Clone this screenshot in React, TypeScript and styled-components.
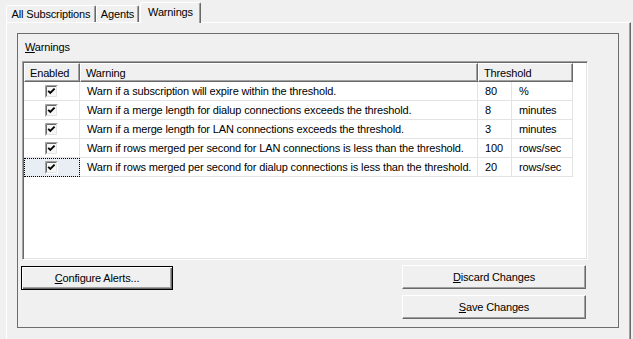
import styled, { createGlobalStyle } from "styled-components";

interface IWarning {
  text: string;
  value: string;
  unit: string;
}

const warnings: IWarning[] = [
  { text: "Warn if a subscription will expire within the threshold.", value: "80", unit: "%" },
  { text: "Warn if a merge length for dialup connections exceeds the threshold.", value: "8", unit: "minutes" },
  { text: "Warn if a merge length for LAN connections exceeds the threshold.", value: "3", unit: "minutes" },
  { text: "Warn if rows merged per second for LAN connections is less than the threshold.", value: "100", unit: "rows/sec" },
  { text: "Warn if rows merged per second for dialup connections is less than the threshold.", value: "20", unit: "rows/sec" },
];

function CheckBox() {
  return (
    <svg width="13" height="13" viewBox="0 0 13 13">
      <rect x="0" y="0" width="13" height="13" fill="#ffffff" />
      <path d="M0.5 12.5 V0.5 H12.5" stroke="#a0a0a0" fill="none" />
      <path d="M1.5 11.5 V1.5 H11.5" stroke="#696969" fill="none" />
      <path d="M1.5 11.5 H11.5 V1.5" stroke="#e3e3e3" fill="none" />
      <rect x="2" y="2" width="9" height="9" fill="#f7f7f7" />
      <path d="M3.2 5.8 L5.3 7.9 L9.6 3.6" stroke="#000" strokeWidth="1.9" fill="none" />
    </svg>
  );
}

export default function App() {
  return (
    <>
      <GlobalStyle />
      <Window>
        <TabStrip>
          <Tab $width={90}>All Subscriptions</Tab>
          <Tab $width={43}>Agents</Tab>
          <Tab $width={61} $active>Warnings</Tab>
        </TabStrip>
        <Panel>
          <GroupBox>
            <GroupLabel><u>W</u>arnings</GroupLabel>
            <Grid>
              <Table>
                <HeaderCell>Enabled</HeaderCell>
                <HeaderCell>Warning</HeaderCell>
                <HeaderCell $span={2}>Threshold</HeaderCell>
                {warnings.map((w, i) => (
                  <Row key={i}>
                    <CheckCell $focused={i === warnings.length - 1}>
                      <CheckBox />
                    </CheckCell>
                    <Cell>{w.text}</Cell>
                    <Cell>{w.value}</Cell>
                    <Cell>{w.unit}</Cell>
                  </Row>
                ))}
              </Table>
            </Grid>
            <BottomRow>
              <LeftColumn>
                <Button $width={152} $default>
                  <u>C</u>onfigure Alerts...
                </Button>
              </LeftColumn>
              <RightColumn>
                <Button $width={184}>
                  <u>D</u>iscard Changes
                </Button>
                <Button $width={184}>
                  <u>S</u>ave Changes
                </Button>
              </RightColumn>
            </BottomRow>
          </GroupBox>
        </Panel>
      </Window>
    </>
  );
}

const GlobalStyle = createGlobalStyle`
  html, body {
    margin: 0;
    padding: 0;
    background: #f0f0f0;
    overflow: hidden;
  }
  body {
    font-family: "Liberation Sans", Arial, sans-serif;
    font-size: 11px;
    letter-spacing: -0.15px;
    color: #000;
  }
`;

const Window = styled.div`
  width: 633px;
  height: 339px;
  display: flex;
  flex-direction: column;
`;

const TabStrip = styled.div`
  height: 22px;
  padding-left: 6px;
  display: flex;
  align-items: flex-end;
  box-sizing: border-box;
`;

const Tab = styled.div<{ $active?: boolean; $width: number }>`
  position: relative;
  z-index: 1;
  width: ${(p) => p.$width}px;
  height: ${(p) => (p.$active ? 21 : 17)}px;
  margin-left: ${(p) => (p.$active ? 1 : 0)}px;
  margin-bottom: ${(p) => (p.$active ? -1 : 0)}px;
  box-sizing: border-box;
  background: #f0f0f0;
  border-top: 1px solid #fff;
  border-left: 1px solid #fff;
  border-right: 1px solid #696969;
  border-radius: 2px 2px 0 0;
  box-shadow: inset -1px 0 0 #a0a0a0;
  display: flex;
  justify-content: center;
  padding-top: ${(p) => (p.$active ? 3 : 2)}px;
  line-height: 13px;
  white-space: nowrap;
`;

const Panel = styled.div`
  width: 625px;
  height: 317px;
  margin-left: 6px;
  box-sizing: border-box;
  border-top: 1px solid #fff;
  border-left: 1px solid #fff;
  border-right: 1px solid #696969;
  box-shadow: inset -1px 0 0 #a0a0a0;
  padding: 10px 0 0 10px;
`;

const GroupBox = styled.div`
  width: 602px;
  height: 295px;
  box-sizing: border-box;
  border: 1px solid #6d6d6d;
  padding: 7px 0 0 4px;
  display: flex;
  flex-direction: column;
`;

const GroupLabel = styled.div`
  margin-left: 3px;
  height: 13px;
  line-height: 13px;
`;

const Grid = styled.div`
  margin-top: 7px;
  width: 566px;
  height: 199px;
  box-sizing: border-box;
  background: #fff;
  border-top: 1px solid #a0a0a0;
  border-left: 1px solid #a0a0a0;
  border-right: 1px solid #fff;
  border-bottom: 1px solid #fff;
  box-shadow: inset 1px 1px 0 #696969, inset -1px -1px 0 #e3e3e3;
  padding: 1px;
`;

const Table = styled.div`
  display: grid;
  grid-template-columns: 56px 398px 34px 61px;
  grid-auto-rows: 19px;
`;

const Row = styled.div`
  display: contents;
`;

const HeaderCell = styled.div<{ $span?: number }>`
  grid-column: span ${(p) => p.$span ?? 1};
  box-sizing: border-box;
  background: #f0f0f0;
  border-top: 1px solid #fff;
  border-left: 1px solid #fff;
  border-right: 1px solid #696969;
  border-bottom: 1px solid #696969;
  box-shadow: inset -1px -1px 0 #a0a0a0;
  padding-left: 5px;
  display: flex;
  align-items: center;
`;

const Cell = styled.div`
  box-sizing: border-box;
  border-right: 1px solid #e3e3e3;
  border-bottom: 1px solid #e3e3e3;
  padding-left: 7px;
  display: flex;
  align-items: center;
  white-space: nowrap;
  overflow: hidden;
`;

const CheckCell = styled(Cell)<{ $focused?: boolean }>`
  padding-left: 0;
  justify-content: center;
  background: ${(p) => (p.$focused ? "#e9eef4" : "#fff")};
  outline: ${(p) => (p.$focused ? "1px dotted #000" : "none")};
  outline-offset: -1px;
`;

const BottomRow = styled.div`
  margin: 5px 0 0 -1px;
  padding-right: 32px;
  display: flex;
  justify-content: space-between;
`;

const LeftColumn = styled.div`
  padding-top: 1px;
`;

const RightColumn = styled.div`
  display: flex;
  flex-direction: column;
  gap: 6px;
`;

const Button = styled.button<{ $default?: boolean; $width: number }>`
  width: ${(p) => p.$width}px;
  height: 24px;
  box-sizing: border-box;
  padding: 0;
  margin: 0;
  font: inherit;
  letter-spacing: inherit;
  color: #000;
  background: #f0f0f0;
  border-top: 1px solid ${(p) => (p.$default ? "#000" : "#fff")};
  border-left: 1px solid ${(p) => (p.$default ? "#000" : "#fff")};
  border-right: 1px solid ${(p) => (p.$default ? "#000" : "#696969")};
  border-bottom: 1px solid ${(p) => (p.$default ? "#000" : "#696969")};
  box-shadow: ${(p) =>
    p.$default
      ? "inset 1px 1px 0 #fff, inset -1px -1px 0 #696969, inset -2px -2px 0 #a0a0a0"
      : "inset -1px -1px 0 #a0a0a0"};
  display: flex;
  align-items: center;
  justify-content: center;
`;
